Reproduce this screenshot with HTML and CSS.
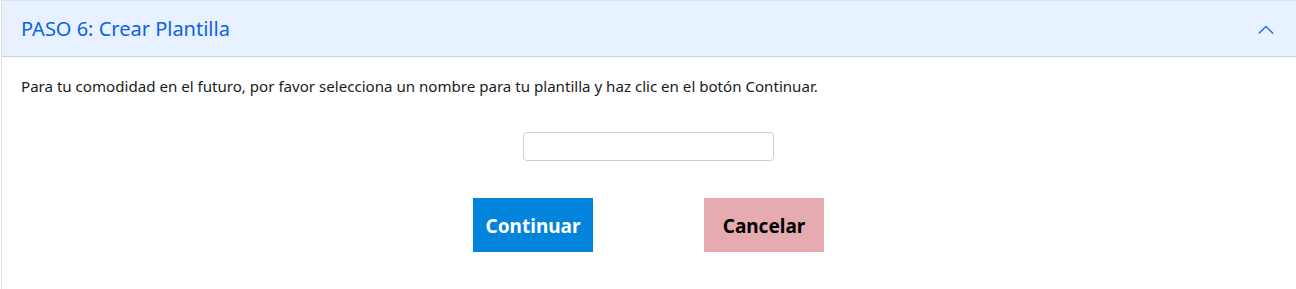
FILE: index.html
```html
<!DOCTYPE html>
<html lang="es">
<head>
<meta charset="utf-8">
<title>Crear Plantilla</title>
<link rel="stylesheet" href="styles.css">
</head>
<body>
<div class="accordion">
  <div class="acc-header">
    <span class="acc-title">PASO 6: Crear Plantilla</span>
    <svg class="chevron" width="16" height="10" viewBox="0 0 16 10" aria-hidden="true">
      <path d="M0.8 8.6 L8 1.6 L15.2 8.6" fill="none" stroke="#1f6fe8" stroke-width="1.4"/>
    </svg>
  </div>
  <div class="acc-body">
    <p class="intro">Para tu comodidad en el futuro, por favor selecciona un nombre para tu plantilla y haz clic en el botón Continuar.</p>
    <div class="field-row">
      <input class="name-input" type="text">
    </div>
    <div class="actions">
      <button class="btn btn-primary" type="button">Continuar</button>
      <button class="btn btn-cancel" type="button">Cancelar</button>
    </div>
  </div>
</div>
</body>
</html>
```

FILE: styles.css
```css
html, body {
  margin: 0;
  padding: 0;
  background: #ffffff;
}
body {
  font-family: "Noto Sans", "Open Sans", sans-serif;
  color: #212529;
  overflow: hidden;
}
.accordion {
  margin-left: 1px;
  margin-right: -1px;
  border-left: 1px solid #dcdcdc;
  border-top: 1px solid #dee2e6;
  height: 288px;
}
.acc-header {
  height: 55px;
  background: #e7f1ff;
  border-bottom: 1px solid #c9d4e4;
  display: flex;
  align-items: center;
  justify-content: space-between;
  padding: 0 23px 0 19px;
}
.acc-title {
  color: #0c63e4;
  font-size: 20px;
  line-height: 1;
  margin-top: 1px;
}
.chevron {
  display: block;
  margin-top: 2px;
}
.acc-body {
  padding: 19px 21px 0 19px;
}
.intro {
  margin: 0;
  font-size: 15.1px;
  line-height: 20px;
  color: #1b1b1b;
}
.field-row {
  display: flex;
  justify-content: center;
  margin-top: 36px;
}
.name-input {
  width: 251px;
  height: 29px;
  box-sizing: border-box;
  border: 1px solid #cfcfcf;
  border-radius: 4px;
  padding: 0 8px;
  font-family: inherit;
  font-size: 14px;
  margin: 0;
  outline: none;
}
.actions {
  display: flex;
  justify-content: center;
  gap: 111px;
  margin-top: 37px;
}
.btn {
  width: 120px;
  height: 54px;
  border: none;
  border-radius: 0;
  font-family: inherit;
  font-weight: 700;
  font-size: 19px;
  line-height: 1;
  padding: 2px 0 0 0;
  margin: 0;
  cursor: pointer;
}
.btn-primary {
  background: #0283dc;
  color: #ffffff;
}
.btn-cancel {
  background: #e6abb0;
  color: #000000;
}
```
